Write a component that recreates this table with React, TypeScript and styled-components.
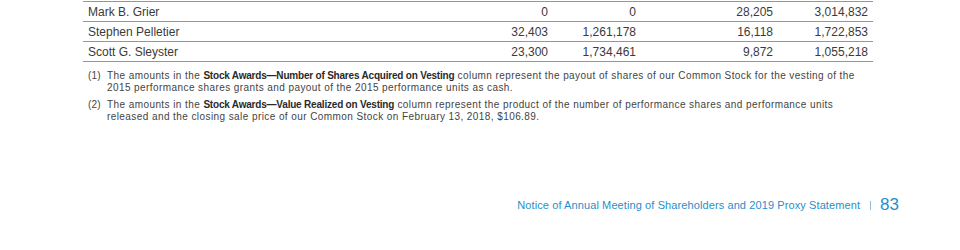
import React from "react";
import styled, { createGlobalStyle } from "styled-components";

const GlobalStyle = createGlobalStyle`
  body {
    margin: 0;
    background: #fff;
    font-family: "Liberation Sans", Arial, sans-serif;
  }
`;

interface Row {
  name: string;
  values: string[];
}

const rows: Row[] = [
  { name: "Mark B. Grier", values: ["0", "0", "28,205", "3,014,832"] },
  { name: "Stephen Pelletier", values: ["32,403", "1,261,178", "16,118", "1,722,853"] },
  { name: "Scott G. Sleyster", values: ["23,300", "1,734,461", "9,872", "1,055,218"] },
];

export default function App() {
  return (
    <Page>
      <GlobalStyle />
      <Table>
        {rows.map((row) => (
          <TableRow key={row.name}>
            <NameCell>{row.name}</NameCell>
            {row.values.map((v, i) => (
              <NumCell key={i}>{v}</NumCell>
            ))}
          </TableRow>
        ))}
      </Table>
      <Notes>
        {/* line breaks follow the printed page */}
        <Note>
          <NoteMark>(1)</NoteMark>
          <NoteText>
            <NoteLine>
              The amounts in the <Strong>Stock Awards—Number of Shares Acquired on Vesting</Strong>{" "}
              column represent the payout of shares of our Common Stock for the vesting of the
            </NoteLine>
            <NoteLine>
              2015 performance shares grants and payout of the 2015 performance units as cash.
            </NoteLine>
          </NoteText>
        </Note>
        <Note>
          <NoteMark>(2)</NoteMark>
          <NoteText>
            <NoteLine>
              The amounts in the <Strong>Stock Awards—Value Realized on Vesting</Strong> column
              represent the product of the number of performance shares and performance units
            </NoteLine>
            <NoteLine>
              released and the closing sale price of our Common Stock on February 13, 2018, $106.89.
            </NoteLine>
          </NoteText>
        </Note>
      </Notes>
      <Footer>
        <FooterTitle>Notice of Annual Meeting of Shareholders and 2019 Proxy Statement</FooterTitle>
        <FooterBar />
        <PageNumber>83</PageNumber>
      </Footer>
    </Page>
  );
}

const Page = styled.div`
  width: 960px;
  height: 250px;
  padding-top: 1px;
  box-sizing: border-box;
`;

const Table = styled.div`
  margin-left: 83px;
  width: 790px;
  border-top: 1px solid #5fa6d2;
`;

const TableRow = styled.div`
  display: grid;
  grid-template-columns: 382px 88px 88px 137px 95px;
  height: 19px;
  align-items: center;
  border-bottom: 1px solid #5fa6d2;
  font-size: 12px;
  color: #3a3a3a;
`;

const NameCell = styled.div`
  padding-left: 5px;
  white-space: nowrap;
`;

const NumCell = styled.div`
  text-align: right;
  padding-right: 5px;
`;

const Notes = styled.div`
  margin: 8px 0 0 88px;
  width: 775px;
  display: flex;
  flex-direction: column;
  gap: 6px;
`;

const Note = styled.div`
  display: flex;
  font-size: 10px;
  line-height: 11.5px;
  letter-spacing: 0.42px;
  color: #444;
`;

const NoteMark = styled.span`
  flex: 0 0 19px;
  letter-spacing: 0.2px;
`;

const NoteText = styled.div`
  flex: 1;
  display: flex;
  flex-direction: column;
`;

const NoteLine = styled.span`
  white-space: nowrap;
`;

const Strong = styled.b`
  color: #2a2a2a;
  letter-spacing: -0.2px;
`;

const Footer = styled.div`
  display: flex;
  align-items: center;
  justify-content: flex-end;
  margin-top: 73px;
  padding-right: 61px;
  color: #1f8fcb;
`;

const FooterTitle = styled.span`
  font-size: 11px;
  letter-spacing: 0.1px;
`;

const FooterBar = styled.span`
  width: 1px;
  height: 9px;
  background: #8cbfdf;
  margin: 0 9px 0 10px;
`;

const PageNumber = styled.span`
  font-size: 17px;
`;
